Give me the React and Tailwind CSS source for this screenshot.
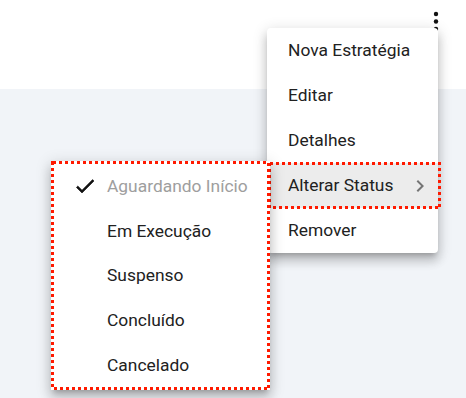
import React from 'react';

const mainItems = ['Nova Estratégia', 'Editar', 'Detalhes', 'Alterar Status', 'Remover'];
const statusItems = ['Aguardando Início', 'Em Execução', 'Suspenso', 'Concluído', 'Cancelado'];

function MoreVert() {
  return (
    <svg width="10" height="24" viewBox="0 0 10 24" className="block">
      <circle cx="5" cy="4" r="2.2" fill="#111" />
      <circle cx="5" cy="11.5" r="2.2" fill="#111" />
      <circle cx="5" cy="19" r="2.2" fill="#111" />
    </svg>
  );
}

function Check() {
  return (
    <svg width="24" height="24" viewBox="0 0 24 24" className="block">
      <path d="M9 16.17L4.83 12l-1.42 1.41L9 19 21 7l-1.41-1.41z" fill="#111" stroke="#111" strokeWidth="0.6" />
    </svg>
  );
}

function ChevronRight() {
  return (
    <svg width="24" height="24" viewBox="0 0 24 24" className="block">
      <path d="M10 6 8.59 7.41 13.17 12l-4.58 4.59L10 18l6-6z" fill="#757575" />
    </svg>
  );
}

// square-dotted red frame (3px dots, 3px gaps)
function DottedFrame({ w, h }) {
  return (
    <svg width={w} height={h} className="absolute left-0 top-0 pointer-events-none" shapeRendering="crispEdges">
      <rect x="1.5" y="1.5" width={w - 3} height={h - 3} fill="none" stroke="#ff1a00" strokeWidth="3" strokeDasharray="3 3" />
    </svg>
  );
}

export default function App() {
  return (
    <div className="relative w-full h-[398px] overflow-hidden bg-[#f1f4f8] font-['Roboto','Liberation_Sans',sans-serif] text-[17.4px] text-[#212121]">
      {/* top bar */}
      <div className="h-[89px] bg-white flex justify-end items-start pr-[25px] pt-[10px]">
        <MoreVert />
      </div>

      {/* main menu */}
      <div className="absolute left-[267px] top-[28px] w-[171px] bg-white rounded-[4px] shadow-[0_5px_5px_-3px_rgba(0,0,0,0.2),0_8px_10px_1px_rgba(0,0,0,0.14),0_3px_14px_2px_rgba(0,0,0,0.12)]">
        {mainItems.map((item) => (
          <div
            key={item}
            className={`h-[45px] flex items-center justify-between pl-[21px] pr-[6px] ${item === 'Alterar Status' ? 'bg-[#ececec]' : ''}`}
          >
            <span>{item}</span>
            {item === 'Alterar Status' && <ChevronRight />}
          </div>
        ))}
        {/* highlight around the active row */}
        <div className="absolute left-[1px] top-[134px] w-[173px] h-[47px] pointer-events-none">
          <DottedFrame w={173} h={47} />
        </div>
      </div>

      {/* status submenu */}
      <div className="absolute left-[51px] top-[161px] w-[219px] h-[229px] p-[3px] bg-white shadow-[0_5px_5px_-3px_rgba(0,0,0,0.2),0_8px_10px_1px_rgba(0,0,0,0.14),0_3px_14px_2px_rgba(0,0,0,0.12)]">
        {statusItems.map((item, i) => (
          <div key={item} className="h-[44.6px] flex items-center">
            <div className="w-[53px] flex justify-end pr-[10px]">
              {i === 0 && <Check />}
            </div>
            <span className={i === 0 ? 'text-[#9e9e9e]' : ''}>{item}</span>
          </div>
        ))}
        <DottedFrame w={219} h={229} />
      </div>
    </div>
  );
}
